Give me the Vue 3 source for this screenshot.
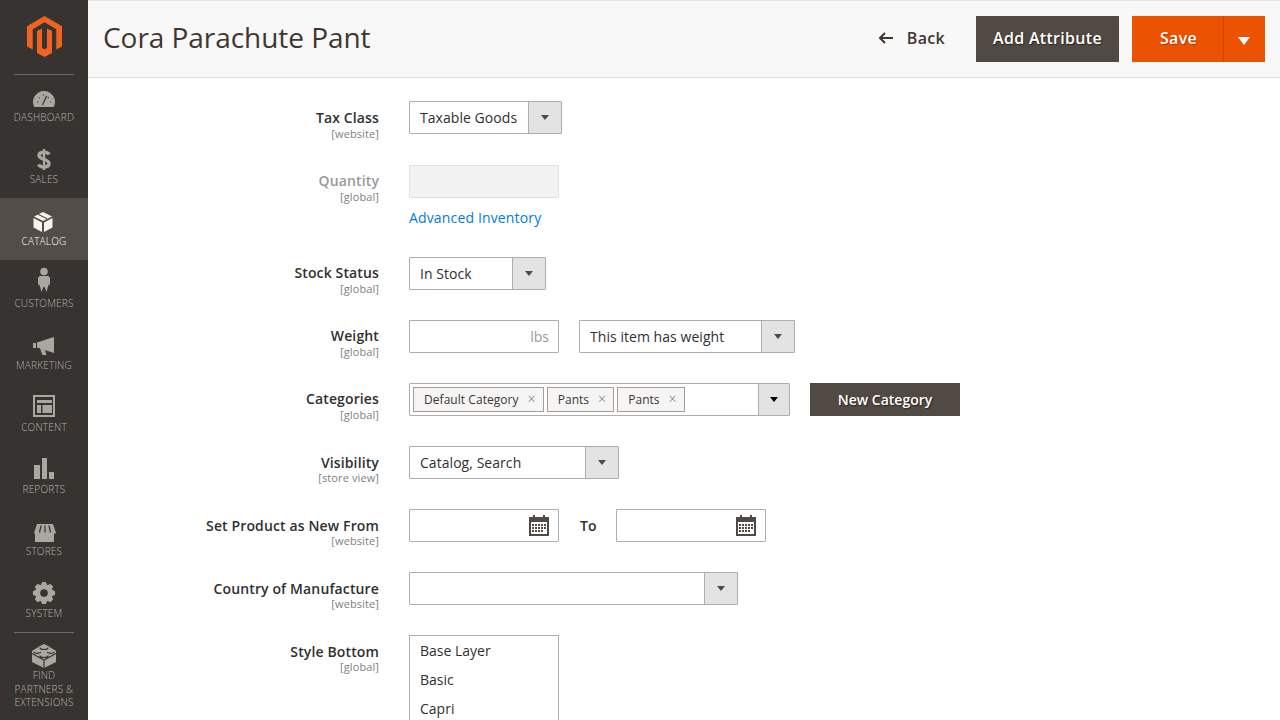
<script setup>
// gear outline for the System icon
const gearPath = () => {
  const teeth = 8
  let d = ''
  for (let i = 0; i < teeth; i++) {
    const a = (i / teeth) * Math.PI * 2 - Math.PI / 2
    const step = Math.PI / teeth
    const pts = [
      [8.6, a - step * 0.95],
      [11.2, a - step * 0.42],
      [11.2, a + step * 0.42],
      [8.6, a + step * 0.95]
    ]
    pts.forEach(([r, t], j) => {
      const x = (14 + r * Math.cos(t)).toFixed(2)
      const y = (14 + r * Math.sin(t)).toFixed(2)
      d += (i === 0 && j === 0 ? 'M' : 'L') + x + ' ' + y
    })
  }
  return d + 'Z M14 10.2a3.8 3.8 0 1 0 0 7.6a3.8 3.8 0 1 0 0-7.6Z'
}

const menu = [
  {
    label: 'Dashboard',
    fill: 'M4.2 24A11 11 0 1 1 23.8 24Z',
    cut: 'M12.5 22L16.5 13M7 19h1.2M8.8 14.4l.8.8M13.5 11.4v1.2M18.6 14.2l-.8.8M20 19h1.2'
  },
  {
    label: 'Sales',
    line: 'M19 9.5C17.5 6.5 9 6 9 10.5C9 15 19 13.5 19 18.5C19 23 10.5 23 8.5 19.5',
    thin: 'M14 4V25'
  },
  {
    label: 'Catalog',
    active: true,
    fill: 'M13 5L22 9.5L13 14L4 9.5Z M3.5 11L12 15.5V25L3.5 20.5Z M14 15.5L22.5 11V20.5L14 25Z',
    cut: 'M8 7.2L17 11.8'
  },
  {
    label: 'Customers',
    fill: 'M14 -1.3a3.8 3.8 0 1 0 0 7.6a3.8 3.8 0 1 0 0-7.6Z M9.5 7H18.5L20 9V15L18.3 16.5L16.5 23L14.6 18H13.4L11.5 23L9.7 16.5L8 15V9Z'
  },
  {
    label: 'Marketing',
    fill: 'M3 12H6V17H3Z M7 11.5L24 6V22L7 16.5Z M10 17.5L15 19L16.5 24H12.5Z'
  },
  {
    label: 'Content',
    fill: 'M3 2H25V24H3Z M5 4V22H23V4Z M7 7H22V10H7Z M7 12H11V20H7Z M12.5 12H22V20H12.5Z'
  },
  {
    label: 'Reports',
    fill: 'M4 10H10V24H4Z M12 3H17V24H12Z M19 17H24V24H19Z'
  },
  {
    label: 'Stores',
    fill: 'M7 7H23L26 16V16.5H24V25H5V16.5H4V16Z',
    cut: 'M11 8.5L9.5 15.5M15 8.5V15.5M19 8.5L20.5 15.5'
  },
  { label: 'System', fill: gearPath() },
  {
    label: 'Find Partners & Extensions',
    tall: true,
    fill: 'M14 3L19 5.5L26 10V21L14 27L2 21V10L9 5.5Z',
    cut: 'M2 12.5L14 19L26 12.5M14 19V27M10 6.5a4 2 0 0 0 8 0M3.5 11a4 2 0 0 0 7.5 0M17 11a4 2 0 0 0 7.5 0M10 14.5a4 2 0 0 0 8 0'
  }
]
</script>

<template>
  <div class="admin">
    <nav class="sidebar">
      <div class="logo">
        <svg width="35" height="41" viewBox="0 0 35 41">
          <path fill="#f26322" d="M17.5 0L35 10.2V30.6L29.3 33.6V13.2L17.5 6.2L5.7 13.2V33.6L0 30.6V10.2Z" />
          <path fill="#f26322" d="M17.5 41L10 37V15L15 12.5V32L17.5 33.5L20 32V12.5L25 15V37Z" />
        </svg>
      </div>
      <template v-for="item in menu" :key="item.label">
        <div v-if="item.tall" class="divider"></div>
        <a class="menu-item" :class="{ active: item.active, tall: item.tall }">
          <svg class="menu-icon" width="28" height="28" viewBox="0 0 28 28">
            <path v-if="item.fill" class="icon-fill" fill-rule="evenodd" :d="item.fill" />
            <path v-if="item.line" class="icon-line" :d="item.line" />
            <path v-if="item.thin" class="icon-thin" :d="item.thin" />
            <path v-if="item.cut" class="icon-cut" :d="item.cut" />
          </svg>
          <span class="menu-label">{{ item.label }}</span>
        </a>
      </template>
    </nav>

    <main class="content">
      <header class="page-header">
        <h1>Cora Parachute Pant</h1>
        <div class="actions">
          <button class="back">
            <svg width="14" height="12" viewBox="0 0 14 12">
              <path d="M6 1L1 6L6 11M1 6H14" fill="none" stroke="#41362f" stroke-width="2" />
            </svg>
            Back
          </button>
          <button class="btn btn-dark btn-add">Add Attribute</button>
          <div class="save">
            <button class="save-main">Save</button>
            <button class="save-toggle"><span class="arrow-white"></span></button>
          </div>
        </div>
      </header>

      <form class="product-form" @submit.prevent>
        <div class="row row-first">
          <div class="label"><b>Tax Class</b><small>[website]</small></div>
          <div class="control">
            <div class="select w-tax">Taxable Goods<span class="select-btn"><i></i></span></div>
          </div>
        </div>

        <div class="row row-qty">
          <div class="label muted"><b>Quantity</b><small>[global]</small></div>
          <div class="control-stack">
            <input class="input disabled" disabled />
            <a class="link">Advanced Inventory</a>
          </div>
        </div>

        <div class="row">
          <div class="label"><b>Stock Status</b><small>[global]</small></div>
          <div class="control">
            <div class="select w-stock">In Stock<span class="select-btn"><i></i></span></div>
          </div>
        </div>

        <div class="row">
          <div class="label"><b>Weight</b><small>[global]</small></div>
          <div class="control">
            <div class="input weight">lbs</div>
            <div class="select w-weight">This item has weight<span class="select-btn"><i></i></span></div>
          </div>
        </div>

        <div class="row">
          <div class="label"><b>Categories</b><small>[global]</small></div>
          <div class="control">
            <div class="select w-cat">
              <span class="tag">Default Category<em>×</em></span>
              <span class="tag">Pants<em>×</em></span>
              <span class="tag">Pants<em>×</em></span>
              <span class="select-btn"><i class="black"></i></span>
            </div>
            <button class="btn btn-dark btn-new">New Category</button>
          </div>
        </div>

        <div class="row row-low">
          <div class="label"><b>Visibility</b><small>[store view]</small></div>
          <div class="control">
            <div class="select w-vis">Catalog, Search<span class="select-btn"><i></i></span></div>
          </div>
        </div>

        <div class="row row-low">
          <div class="label"><b>Set Product as New From</b><small>[website]</small></div>
          <div class="control">
            <div class="input date">
              <svg width="20" height="21" viewBox="0 0 20 21">
                <path fill="#514943" d="M0 2H4V0H6V2H14V0H16V2H20V21H0Z" />
                <path fill="#fff" d="M2 7H18V19H2Z" />
                <path fill="#514943" d="M3 9h2v2H3zM6 9h2v2H6zM9 9h2v2H9zM12 9h2v2h-2zM15 9h2v2h-2zM3 12h2v2H3zM6 12h2v2H6zM9 12h2v2H9zM12 12h2v2h-2zM15 12h2v2h-2zM3 15h2v2H3zM6 15h2v2H6zM9 15h2v2H9zM12 15h2v2h-2z" />
              </svg>
            </div>
            <span class="to">To</span>
            <div class="input date">
              <svg width="20" height="21" viewBox="0 0 20 21">
                <path fill="#514943" d="M0 2H4V0H6V2H14V0H16V2H20V21H0Z" />
                <path fill="#fff" d="M2 7H18V19H2Z" />
                <path fill="#514943" d="M3 9h2v2H3zM6 9h2v2H6zM9 9h2v2H9zM12 9h2v2h-2zM15 9h2v2h-2zM3 12h2v2H3zM6 12h2v2H6zM9 12h2v2H9zM12 12h2v2h-2zM15 12h2v2h-2zM3 15h2v2H3zM6 15h2v2H6zM9 15h2v2H9zM12 15h2v2h-2z" />
              </svg>
            </div>
          </div>
        </div>

        <div class="row row-low">
          <div class="label"><b>Country of Manufacture</b><small>[website]</small></div>
          <div class="control">
            <div class="select w-country"><span class="select-btn"><i></i></span></div>
          </div>
        </div>

        <div class="row row-low">
          <div class="label"><b>Style Bottom</b><small>[global]</small></div>
          <div class="multi">
            <div>Base Layer</div>
            <div>Basic</div>
            <div>Capri</div>
          </div>
        </div>
      </form>
    </main>
  </div>
</template>

<style>
body {
  background: #fff;
}
</style>

<style scoped>
.admin {
  display: flex;
  width: 1280px;
  height: 720px;
  overflow: hidden;
  font-family: "Open Sans", sans-serif;
  color: #303030;
}

/* Sidebar */
.sidebar {
  width: 88px;
  flex: none;
  background: #373330;
  display: flex;
  flex-direction: column;
  align-items: center;
}
.logo {
  height: 75px;
  padding-top: 16px;
  width: 60px;
  box-sizing: border-box;
  display: flex;
  justify-content: center;
  align-items: flex-start;
  border-bottom: 1px solid #736963;
  margin-bottom: -1px;
  flex: none;
}
.divider {
  width: 60px;
  height: 1px;
  background: #736963;
  margin-bottom: -1px;
  flex: none;
}
.menu-item {
  width: 100%;
  height: 62px;
  flex: none;
  padding-top: 9px;
  box-sizing: border-box;
  display: flex;
  flex-direction: column;
  align-items: center;
  color: #aaa6a0;
}
.menu-item.tall {
  height: 88px;
}
.menu-item.active {
  background: #524d49;
  color: #f7f3eb;
}
.menu-icon {
  overflow: visible;
  flex: none;
}
.icon-fill {
  fill: currentColor;
}
.icon-line {
  fill: none;
  stroke: currentColor;
  stroke-width: 3.4;
}
.icon-thin {
  fill: none;
  stroke: currentColor;
  stroke-width: 2.4;
}
.icon-cut {
  fill: none;
  stroke: #373330;
  stroke-width: 1.2;
}
.active .icon-cut {
  stroke: #524d49;
}
.menu-label {
  font-size: 10px;
  font-weight: 300;
  line-height: 13.5px;
  text-transform: uppercase;
  text-align: center;
  letter-spacing: 0.2px;
  width: 70px;
  color: #b5b1ab;
}
.active .menu-label {
  color: #fff;
}

/* Header */
.content {
  flex: 1;
  min-width: 0;
}
.page-header {
  height: 78px;
  box-sizing: border-box;
  background: #f8f8f8;
  border-top: 1px solid #e3e3e3;
  border-bottom: 1px solid #e3e3e3;
  display: flex;
  align-items: center;
  justify-content: space-between;
  padding: 0 15px;
}
h1 {
  margin: 0 0 4px;
  font-size: 28px;
  font-weight: 400;
  letter-spacing: -0.05px;
  color: #41362f;
}
.actions {
  display: flex;
  align-items: center;
}
button {
  font-family: inherit;
  border: none;
  cursor: pointer;
}
.back {
  display: flex;
  align-items: center;
  gap: 14px;
  background: none;
  padding: 0 0 2px;
  margin-right: 31px;
  font-size: 16px;
  font-weight: 600;
  letter-spacing: 0.3px;
  color: #41362f;
}
.btn-dark {
  background: #514943;
  color: #fff;
  font-weight: 600;
  text-shadow: 1px 1px 1px rgba(0, 0, 0, 0.5);
  padding: 0 0 2px;
}
.btn-add {
  width: 143px;
  height: 46px;
  font-size: 16px;
  letter-spacing: 0.3px;
  margin-right: 13px;
}
.save {
  display: flex;
  height: 46px;
}
.save-main,
.save-toggle {
  background: #eb5202;
  color: #fff;
}
.save-main {
  width: 91px;
  padding: 0 0 2px 2px;
  font-size: 16px;
  font-weight: 600;
  letter-spacing: 0.3px;
  text-shadow: 1px 1px 1px rgba(0, 0, 0, 0.3);
}
.save-toggle {
  width: 42px;
  border-left: 1px solid #c84600;
  display: flex;
  align-items: center;
  justify-content: center;
  padding: 4px 2px 0 0;
}
.arrow-white {
  border-left: 6px solid transparent;
  border-right: 6px solid transparent;
  border-top: 8px solid #fff;
}

/* Form */
.product-form {
  padding-top: 23px;
}
.row {
  display: flex;
  gap: 30px;
  margin-bottom: 30px;
  height: 33px;
}
.row-first {
  margin-bottom: 31px;
}
.row-qty {
  height: auto;
  margin-bottom: 28px;
}
.label {
  width: 291px;
  height: 33px;
  flex: none;
  text-align: right;
  padding-top: 6px;
  box-sizing: border-box;
}
.row-first .label {
  padding-top: 7px;
}
.row-low .label {
  padding-top: 7px;
}
.row-low .label small {
  margin-top: -1px;
}
.label b {
  display: block;
  font-size: 14px;
  line-height: 19px;
  font-weight: 600;
  letter-spacing: 0.13px;
}
.label small {
  display: block;
  font-size: 11px;
  line-height: 13px;
  letter-spacing: 0.1px;
  color: #808080;
}
.label.muted b {
  color: #999;
}
.control {
  display: flex;
  align-items: center;
}
.control-stack {
  display: flex;
  flex-direction: column;
}
.select,
.input {
  box-sizing: border-box;
  height: 33px;
  border: 1px solid #adadad;
  border-radius: 1px;
  background: #fff;
  font-size: 14px;
  flex: none;
}
.select {
  position: relative;
  display: flex;
  align-items: center;
  padding-left: 10px;
  letter-spacing: 0.05px;
}
.select-btn {
  position: absolute;
  top: 0;
  right: 0;
  bottom: 0;
  width: 33px;
  box-sizing: border-box;
  background: #e3e3e3;
  border-left: 1px solid #adadad;
  display: flex;
  align-items: center;
  justify-content: center;
}
.select-btn i {
  border-left: 4.5px solid transparent;
  border-right: 4.5px solid transparent;
  border-top: 5px solid #514943;
}
.select-btn i.black {
  border-top-color: #000;
}
.w-tax { width: 153px; }
.w-stock { width: 137px; }
.w-weight { width: 216px; margin-left: 20px; }
.w-cat { width: 381px; padding-left: 3px; gap: 3px; }
.w-cat .select-btn { width: 31px; }
.w-vis { width: 210px; }
.w-country { width: 329px; }
.input {
  display: block;
  width: 150px;
}
.input.disabled {
  background: #f2f2f2;
  border-color: #e0e0e0;
}
.weight {
  display: flex;
  align-items: center;
  justify-content: flex-end;
  padding-right: 9px;
  color: #999;
}
.date {
  display: flex;
  align-items: center;
  justify-content: flex-end;
  padding-right: 9px;
}
.to {
  width: 57px;
  box-sizing: border-box;
  padding-left: 21px;
  font-size: 14px;
  font-weight: 600;
}
.link {
  margin-top: 9px;
  font-size: 14px;
  line-height: 22px;
  letter-spacing: 0.15px;
  color: #007bdb;
}
.tag {
  box-sizing: border-box;
  height: 25px;
  border: 1px solid #a79d95;
  background: #f5f5f5;
  display: flex;
  align-items: center;
  padding-left: 10px;
  font-size: 12px;
  letter-spacing: 0.05px;
  color: #41362f;
}
.tag em {
  font-style: normal;
  font-size: 14px;
  font-weight: 300;
  color: #777;
  box-sizing: border-box;
  width: 24px;
  padding-right: 7px;
  text-align: right;
  margin-bottom: 2px;
}
.btn-new {
  width: 150px;
  height: 33px;
  margin-left: 20px;
  font-size: 14px;
  padding: 0;
}
.multi {
  width: 150px;
  box-sizing: border-box;
  height: 120px;
  border: 1px solid #adadad;
  font-size: 14px;
  flex: none;
}
.multi div {
  height: 29px;
  line-height: 29px;
  padding-left: 10px;
}
</style>
